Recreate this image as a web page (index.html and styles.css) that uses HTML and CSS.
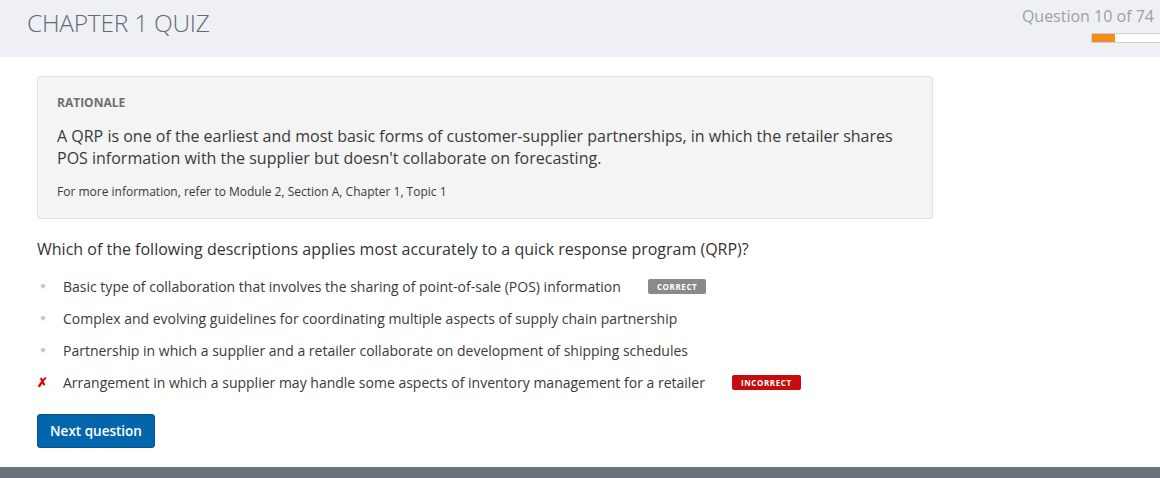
FILE: index.html
```html
<!DOCTYPE html>
<html>
<head>
<meta charset="utf-8">
<link rel="stylesheet" href="styles.css">
</head>
<body>
<header class="topbar">
  <h1 class="title">CHAPTER 1 QUIZ</h1>
  <div class="progress-area">
    <div class="qcount">Question 10 of 74</div>
    <div class="progress"><div class="progress-fill" style="width:23px"></div></div>
  </div>
</header>
<main class="content">
  <section class="rationale">
    <div class="r-label">RATIONALE</div>
    <p class="r-text">A QRP is one of the earliest and most basic forms of customer-supplier partnerships, in which the retailer shares POS information with the supplier but doesn't collaborate on forecasting.</p>
    <p class="r-ref">For more information, refer to Module 2, Section A, Chapter 1, Topic 1</p>
  </section>
  <p class="question">Which of the following descriptions applies most accurately to a quick response program (QRP)?</p>
  <ul class="options">
    <li class="option"><span class="mark"><span class="dot"></span></span><span class="opt-text">Basic type of collaboration that involves the sharing of point-of-sale (POS) information</span><span class="badge badge-correct">CORRECT</span></li>
    <li class="option"><span class="mark"><span class="dot"></span></span><span class="opt-text">Complex and evolving guidelines for coordinating multiple aspects of supply chain partnership</span></li>
    <li class="option"><span class="mark"><span class="dot"></span></span><span class="opt-text">Partnership in which a supplier and a retailer collaborate on development of shipping schedules</span></li>
    <li class="option"><span class="mark mark-x">✗</span><span class="opt-text">Arrangement in which a supplier may handle some aspects of inventory management for a retailer</span><span class="badge badge-incorrect">INCORRECT</span></li>
  </ul>
  <button class="next-btn">Next question</button>
</main>
<footer class="bottombar"></footer>
</body>
</html>
```
FILE: styles.css
```css
* { box-sizing: border-box; }
html, body { margin: 0; padding: 0; }
body {
  font-family: "Open Sans", "Liberation Sans", sans-serif;
  background: #ffffff;
  color: #333;
  width: 1160px;
  height: 478px;
  overflow: hidden;
  display: flex;
  flex-direction: column;
}
.topbar {
  height: 57px;
  background: #eff0f4;
  display: flex;
  justify-content: space-between;
  align-items: flex-start;
  padding: 0 0 0 27px;
}
.title {
  margin: 6px 0 0 0;
  font-weight: 300;
  font-size: 24.5px;
  letter-spacing: -0.25px;
  color: #5f6b7a;
  line-height: 34px;
}
.progress-area {
  display: flex;
  flex-direction: column;
  align-items: flex-end;
  padding-top: 5px;
}
.qcount {
  font-size: 16px;
  color: #9aa0a8;
  line-height: 22px;
  padding-right: 6px;
}
.progress {
  margin-top: 6px;
  width: 69px;
  height: 10px;
  background: #fff;
  border: 1px solid #cfcfcf;
  border-right: none;
  border-radius: 2px 0 0 2px;
}
.progress-fill { height: 100%; background: #f28c1c; }
.content {
  flex: 1;
  padding: 19px 0 0 37px;
}
.rationale {
  width: 896px;
  background: #f4f4f4;
  border: 1px solid #e2e2e2;
  border-radius: 3px;
  padding: 18px 19px 18px 19px;
}
.r-label {
  font-size: 12px;
  font-weight: 700;
  color: #6f6f6f;
  line-height: 16px;
}
.r-text {
  margin: 14px 0 0 0;
  font-size: 16px;
  line-height: 22px;
  color: #3a3a3a;
}
.r-ref {
  margin: 15px 0 0 0;
  font-size: 12px;
  line-height: 16px;
  color: #3a3a3a;
}
.question {
  margin: 19px 0 0 0;
  font-size: 16px;
  line-height: 22px;
  color: #333;
}
.options {
  list-style: none;
  margin: 10px 0 0 0;
  padding: 0;
}
.option {
  display: flex;
  align-items: center;
  height: 32px;
  font-size: 14px;
  color: #3a3a3a;
}
.mark {
  width: 26px;
  display: flex;
  justify-content: flex-start;
  padding-left: 3px;
}
.dot {
  width: 4px;
  height: 4px;
  background: #c8c8c8;
  transform: rotate(45deg);
  margin-left: 1px;
}
.mark-x {
  color: #e00000;
  font-size: 13px;
  font-weight: 700;
  padding-left: 0;
}
.badge {
  margin-left: 27px;
  font-size: 8px;
  font-weight: 700;
  letter-spacing: 0.6px;
  color: #fff;
  border-radius: 2px;
  line-height: 15px;
  padding: 0 9px;
}
.badge-correct { background: #8a8a8a; }
.badge-incorrect { background: #c60c0c; }
.next-btn {
  margin-top: 16px;
  font-family: inherit;
  font-size: 13.5px;
  font-weight: 600;
  color: #fff;
  background: #0366ad;
  border: 1px solid #02568f;
  border-radius: 3px;
  width: 118px;
  height: 34px;
  padding: 0;
  cursor: pointer;
}
.bottombar {
  height: 11px;
  background: #6b747c;
}
```
